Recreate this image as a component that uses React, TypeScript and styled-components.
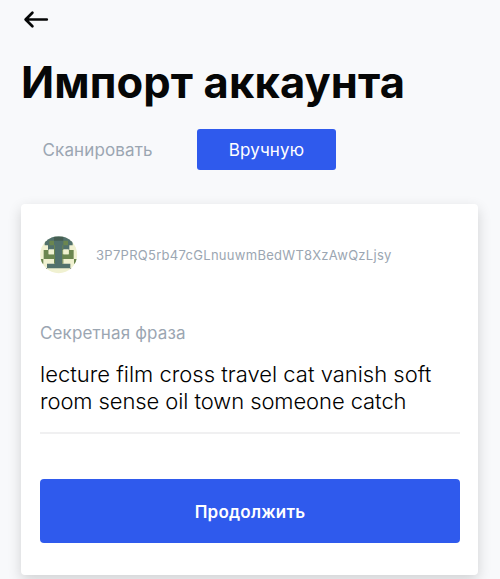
import React from "react";
import styled, { createGlobalStyle } from "styled-components";

const GlobalStyle = createGlobalStyle`
  * { box-sizing: border-box; }
  body {
    margin: 0;
    background: #f8f9fb;
    font-family: Inter, "Liberation Sans", sans-serif;
    overflow: hidden;
  }
`;

const Screen = styled.main`
  height: 579px;
  padding: 8px 22px 0 21px;
  overflow: hidden;
`;

const BackButton = styled.button`
  display: block;
  width: 30px;
  height: 24px;
  padding: 0;
  border: 0;
  background: none;
`;

const Title = styled.h1`
  margin: 22px 0 0;
  font-size: 43.5px;
  line-height: 56px;
  font-weight: 700;
  letter-spacing: 0.12px;
  color: #060707;
  white-space: nowrap;
`;

const Tabs = styled.div`
  display: flex;
  margin-top: 19px;
`;

const Tab = styled.button<{ $active?: boolean }>`
  height: 41px;
  width: ${(p) => (p.$active ? "139px" : "176px")};
  padding: ${(p) => (p.$active ? "0" : "0 0 0 21.5px")};
  text-align: ${(p) => (p.$active ? "center" : "left")};
  border: 0;
  border-radius: 3px;
  font: 400 17px Inter, sans-serif;
  letter-spacing: 0.13px;
  color: ${(p) => (p.$active ? "#fff" : "#9ba6b2")};
  background: ${(p) => (p.$active ? "#2f5aed" : "transparent")};
`;

const Card = styled.section`
  height: 371px;
  margin-top: 34px;
  padding: 31px 18px 0 19px;
  border-radius: 4px;
  background: #fff;
  box-shadow: 0 5px 14px rgba(0, 0, 0, 0.16);
`;

const Account = styled.div`
  display: flex;
  align-items: center;
  gap: 18px;
  height: 39px;
`;

const Address = styled.span`
  font-size: 13px;
  letter-spacing: 0.29px;
  color: #9ba6b2;
`;

const Label = styled.label`
  display: block;
  margin-top: 48px;
  font-size: 17px;
  line-height: 22px;
  letter-spacing: 0.13px;
  color: #9ba6b2;
`;

const Phrase = styled.p`
  height: 73px;
  margin: 17px 0 0;
  font-size: 22px;
  line-height: 27px;
  font-weight: 300;
  color: #000;
  border-bottom: 2px solid #f0f0f1;
  white-space: nowrap;
`;

const PhraseLine = styled.span<{ $spacing: number }>`
  display: block;
  letter-spacing: ${(p) => p.$spacing}px;
`;

const Submit = styled.button`
  display: block;
  width: 100%;
  height: 64px;
  margin-top: 45px;
  padding: 2px 0 0;
  border: 0;
  border-radius: 4px;
  background: #2f5aed;
  color: #fff;
  font: 600 17px Inter, sans-serif;
  letter-spacing: 0.22px;
`;

function Identicon() {
  return (
    <svg width="38" height="38" viewBox="0 0 114 114">
      <clipPath id="disc"><circle cx="56" cy="56" r="55.5" /></clipPath>
      <g clipPath="url(#disc)">
        <rect width="114" height="114" fill="#f0f1d1" />
        <path fill="#52716c" d="M20 0H92V14H98V28H88V42H24V28H14V14H20Z" />
        <path fill="#455e52" d="M42 3H70V14H42Z" />
        <path fill="#6b8650" d="M28 14H42V28H28ZM70 14H84V28H70Z" />
        <path fill="#6b8650" d="M11 42H26V55H86V42H101V69H11ZM0 69H10V83H0ZM102 69H112V83H102Z" />
        <path fill="#52716c" d="M45 28H67V83H91V97H21V83H45Z" />
        <path fill="#6b8650" d="M42 28H45V83H42ZM67 28H70V83H67Z" />
        <path fill="#f0f1d1" d="M26 40H42V55H26ZM70 40H86V55H70Z" />
        <path fill="#455544" d="M14 96H21V104H14ZM91 96H98V104H91Z" />
      </g>
    </svg>
  );
}

export default function App() {
  return (
    <Screen>
      <GlobalStyle />
      <BackButton aria-label="Назад">
        <svg width="30" height="24" viewBox="0 0 30 24" fill="none" stroke="#060707" strokeWidth="2.7" strokeLinecap="round" strokeLinejoin="round">
          <path d="M25.8 11.5H5M11.4 4.8L4.6 11.5L11.4 18.2" />
        </svg>
      </BackButton>
      <Title>Импорт аккаунта</Title>
      <Tabs>
        <Tab>Сканировать</Tab>
        <Tab $active>Вручную</Tab>
      </Tabs>
      <Card>
        <Account>
          <Identicon />
          <Address>3P7PRQ5rb47cGLnuuwmBedWT8XzAwQzLjsy</Address>
        </Account>
        <Label>Секретная фраза</Label>
        <Phrase>
          <PhraseLine $spacing={0}>lecture film cross travel cat vanish soft</PhraseLine>
          <PhraseLine $spacing={-0.09}>room sense oil town someone catch</PhraseLine>
        </Phrase>
        <Submit>Продолжить</Submit>
      </Card>
    </Screen>
  );
}
